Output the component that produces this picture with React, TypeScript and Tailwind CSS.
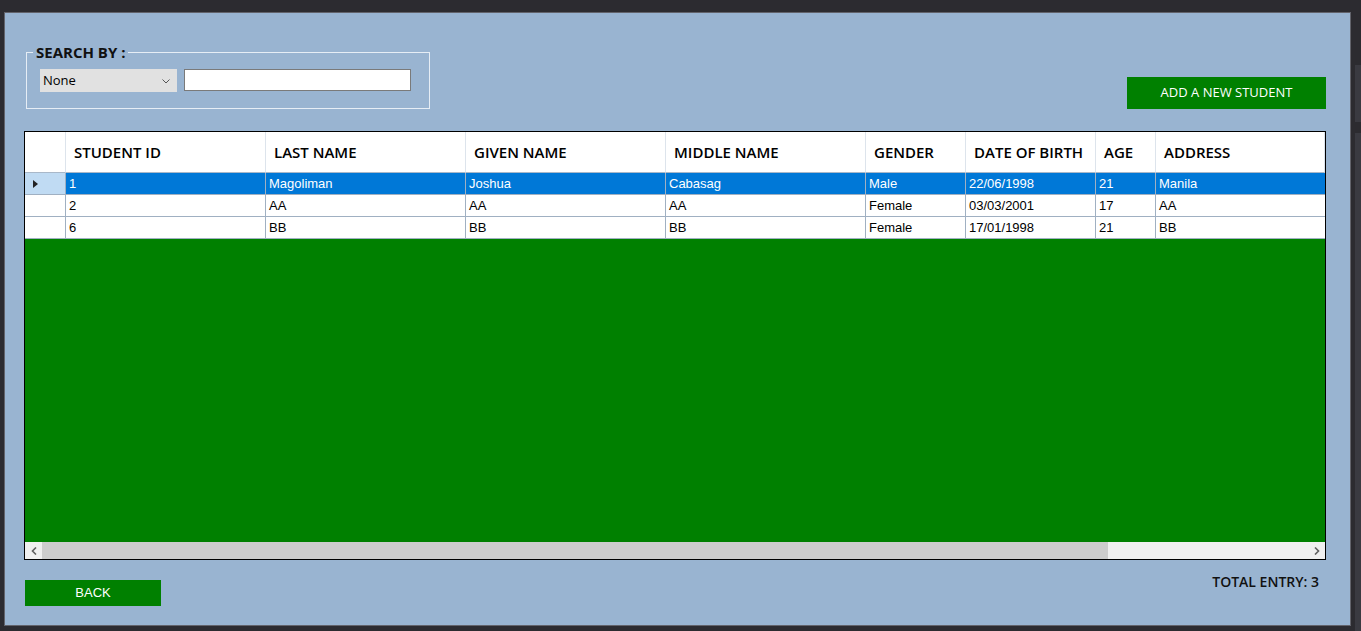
import React from "react";

type Student = {
  id: string;
  last: string;
  given: string;
  middle: string;
  gender: string;
  dob: string;
  age: string;
  address: string;
};

const students: Student[] = [
  { id: "1", last: "Magoliman", given: "Joshua", middle: "Cabasag", gender: "Male", dob: "22/06/1998", age: "21", address: "Manila" },
  { id: "2", last: "AA", given: "AA", middle: "AA", gender: "Female", dob: "03/03/2001", age: "17", address: "AA" },
  { id: "6", last: "BB", given: "BB", middle: "BB", gender: "Female", dob: "17/01/1998", age: "21", address: "BB" },
];

const headers = ["STUDENT ID", "LAST NAME", "GIVEN NAME", "MIDDLE NAME", "GENDER", "DATE OF BIRTH", "AGE", "ADDRESS"];

const ui = "font-['Open_Sans','Noto_Sans',sans-serif]";
const plain = "font-['Liberation_Sans',Arial,sans-serif]";

const gridCols = "grid grid-cols-[41px_200px_200px_200px_200px_100px_130px_60px_1fr]";

const App = () => {
  return (
    <div className="flex h-[631px] w-[1361px] overflow-hidden bg-[#2c2b30]">
      <div className="flex flex-col pl-[4px] pt-[12px] pb-[5px]">
        {/* Main form panel */}
        <div className="flex h-[614px] w-[1347px] flex-col border border-[#62636b] bg-[#99b4d1] pl-[19px] pr-[24px]">
          {/* Search + add row */}
          <div className="mt-[39px] flex items-start justify-between">
            <div className="relative ml-[2px] h-[57px] w-[404px] border border-[#e6edf5] pl-[13px] pt-[16px]">
              <span className={`absolute left-[6px] top-[-11px] bg-[#99b4d1] px-[3px] text-[15px] font-bold leading-[20px] text-[#111] ${ui}`}>
                SEARCH BY :
              </span>
              <div className="flex items-start gap-[7px]">
                <div className={`flex h-[23px] w-[137px] items-center justify-between bg-[#e1e1e1] pl-[3px] pr-[7px] pt-[1px] text-[13px] text-black ${ui}`}>
                  <span>None</span>
                  <svg width="8" height="5" viewBox="0 0 8 5">
                    <path d="M0.5 0.5 L4 4 L7.5 0.5" fill="none" stroke="#555" strokeWidth="1" />
                  </svg>
                </div>
                <input className="h-[22px] w-[227px] border border-[#7a7a7a] bg-white px-1 text-[13px] outline-none" />
              </div>
            </div>
            <button className={`mt-[25px] h-[32px] w-[199px] bg-[#008000] text-[13px] font-medium text-white ${ui}`}>
              ADD A NEW STUDENT
            </button>
          </div>

          {/* Data grid */}
          <div className="mt-[22px] flex h-[429px] w-[1302px] flex-col overflow-hidden border border-black bg-[#008000]">
            <div className={`${gridCols} bg-white`}>
              <div className="h-[41px] border-b border-r border-b-[#a9b8c9] border-r-[#dde4ec]" />
              {headers.map((h) => (
                <div
                  key={h}
                  className={`flex h-[41px] items-center overflow-hidden whitespace-nowrap border-b border-r border-b-[#a9b8c9] border-r-[#dde4ec] pl-[8px] text-[15px] font-semibold text-black ${ui}`}
                >
                  {h}
                </div>
              ))}
            </div>
            {students.map((s, i) => {
              const selected = i === 0;
              const cells = [s.id, s.last, s.given, s.middle, s.gender, s.dob, s.age, s.address];
              return (
                <div key={s.id} className={`${gridCols} ${selected ? "bg-[#0078d7] text-white" : "bg-white text-black"}`}>
                  <div className={`flex h-[22px] items-center border-b border-r border-[#a0b0c2] pl-[8px] ${selected ? "bg-[#c0dbf3]" : "bg-white"}`}>
                    {selected && (
                      <svg width="5" height="8" viewBox="0 0 5 8">
                        <path d="M0 0 L5 4 L0 8 Z" fill="#222" />
                      </svg>
                    )}
                  </div>
                  {cells.map((c, j) => (
                    <div
                      key={j}
                      className={`flex h-[22px] items-center whitespace-nowrap border-b border-[#a0b0c2] pl-[3px] pt-[1px] text-[13px] ${j < 7 ? "border-r" : ""} ${plain}`}
                    >
                      {c}
                    </div>
                  ))}
                </div>
              );
            })}
            <div className="flex-1" />
            {/* Horizontal scrollbar */}
            <div className="flex h-[17px] bg-[#f0f0f0]">
              <div className="flex w-[17px] items-center justify-center">
                <svg width="6" height="8" viewBox="0 0 6 8">
                  <path d="M5 0.5 L1.5 4 L5 7.5" fill="none" stroke="#606060" strokeWidth="1.6" />
                </svg>
              </div>
              <div className="h-full w-[1066px] bg-[#cdcdcd]" />
              <div className="flex-1" />
              <div className="flex w-[17px] items-center justify-center">
                <svg width="6" height="8" viewBox="0 0 6 8">
                  <path d="M1 0.5 L4.5 4 L1 7.5" fill="none" stroke="#606060" strokeWidth="1.6" />
                </svg>
              </div>
            </div>
          </div>

          {/* Bottom row */}
          <div className="flex items-start justify-between">
            <button className={`mt-[20px] ml-[1px] h-[26px] w-[136px] bg-[#008000] text-[13px] text-white ${plain}`}>
              BACK
            </button>
            <div className={`mr-[7px] mt-[11px] text-[14px] font-semibold text-[#111] ${ui}`}>TOTAL ENTRY: 3</div>
          </div>
        </div>
      </div>

      {/* Right-hand strip of the host window */}
      <div className="flex flex-1 flex-col pl-[4px] pt-[65px]">
        <div className="h-[57px] bg-[#3a3a41]" />
        <div className="mt-[11px] flex-1 bg-[#3a3a41]" />
      </div>
    </div>
  );
};

export default App;
